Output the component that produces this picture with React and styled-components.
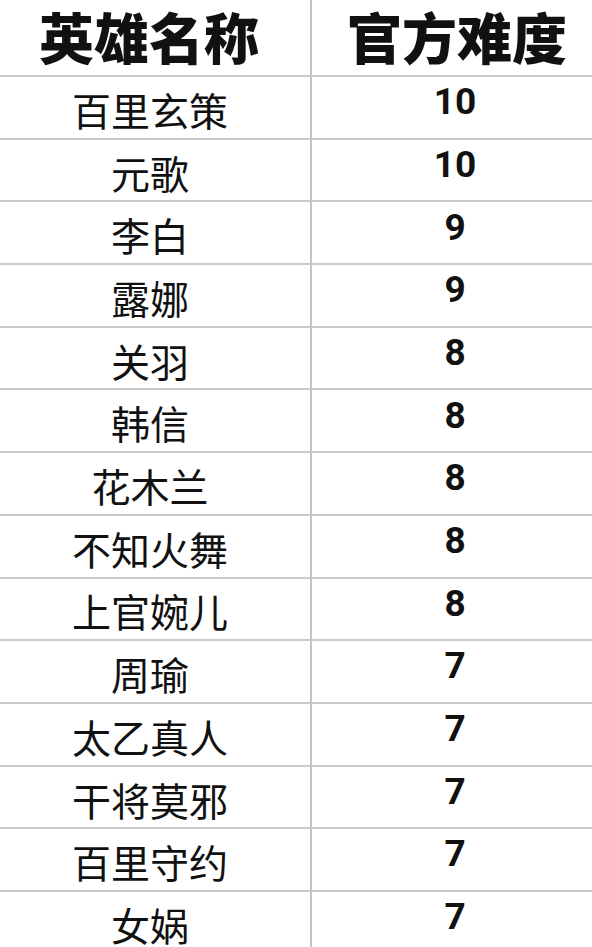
import { Fragment } from "react";
import styled, { createGlobalStyle } from "styled-components";

const GlobalStyle = createGlobalStyle`
  html, body {
    margin: 0;
    padding: 0;
    background: #ffffff;
  }
  * {
    box-sizing: border-box;
  }
`;

const heroes = [
  { name: "百里玄策", level: 10 },
  { name: "元歌", level: 10 },
  { name: "李白", level: 9 },
  { name: "露娜", level: 9 },
  { name: "关羽", level: 8 },
  { name: "韩信", level: 8 },
  { name: "花木兰", level: 8 },
  { name: "不知火舞", level: 8 },
  { name: "上官婉儿", level: 8 },
  { name: "周瑜", level: 7 },
  { name: "太乙真人", level: 7 },
  { name: "干将莫邪", level: 7 },
  { name: "百里守约", level: 7 },
  { name: "女娲", level: 7 },
];

const Table = styled.div`
  width: 592px;
  height: 947px;
  overflow: hidden;
  display: grid;
  grid-template-columns: 312px 1fr;
  grid-template-rows: 77px;
  grid-auto-rows: 62.7px;
  background: #fff;
  color: #111;
`;

const Cell = styled.div`
  display: flex;
  align-items: center;
  justify-content: center;
  border-bottom: 2px solid #cbcbcb;
  border-right: ${(p) => (p.$first ? "2px solid #c4c4c4" : "none")};
  white-space: nowrap;
`;

const HeadCell = styled(Cell)`
  font-family: "Noto Sans CJK SC", sans-serif;
  font-weight: 900;
  font-size: 55px;
  line-height: 1.2;
  padding-bottom: 6px;
  padding-right: ${(p) => (p.$first ? "12px" : "0")};
  padding-left: ${(p) => (p.$first ? "0" : "10px")};
`;

const NameCell = styled(Cell)`
  font-family: "Noto Sans CJK SC", sans-serif;
  font-weight: 400;
  font-size: 39px;
  line-height: 1.2;
  padding-top: 4px;
  padding-right: 10px;
`;

const LevelCell = styled(Cell)`
  font-family: Roboto, "Noto Sans", sans-serif;
  font-weight: 700;
  font-size: 37px;
  line-height: 1.2;
  padding-bottom: 10px;
  padding-left: 6px;
`;

export default function App() {
  return (
    <>
      <GlobalStyle />
      <Table>
        <HeadCell $first>英雄名称</HeadCell>
        <HeadCell>官方难度</HeadCell>
        {heroes.map((h) => (
          <Fragment key={h.name}>
            <NameCell $first>{h.name}</NameCell>
            <LevelCell>{h.level}</LevelCell>
          </Fragment>
        ))}
      </Table>
    </>
  );
}
